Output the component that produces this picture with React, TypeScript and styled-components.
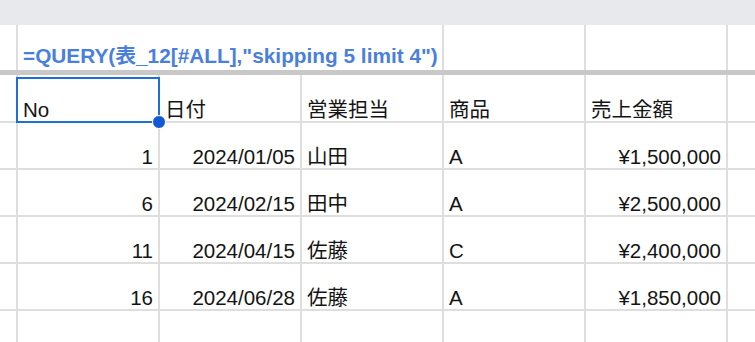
import React from 'react';
import styled, {createGlobalStyle} from 'styled-components';

const rows = [
  {no: 1, date: '2024/01/05', rep: '山田', item: 'A', amount: '¥1,500,000'},
  {no: 6, date: '2024/02/15', rep: '田中', item: 'A', amount: '¥2,500,000'},
  {no: 11, date: '2024/04/15', rep: '佐藤', item: 'C', amount: '¥2,400,000'},
  {no: 16, date: '2024/06/28', rep: '佐藤', item: 'A', amount: '¥1,850,000'},
];

const headers = ['日付', '営業担当', '商品', '売上金額'];

const App = () => {
  return (
    <>
      <GlobalStyle />
      <Page>
        <TopBand />
        <Sheet>
          {/* formula row */}
          <Cell height={45} noBottom />
          <Cell height={45} span={3} noBottom pad={3}>
            <Formula>=QUERY(表_12[#ALL],"skipping 5 limit 4")</Formula>
          </Cell>
          <Cell height={45} noBottom />
          <Cell height={45} noBottom />
          <Cell height={45} noBottom noRight />

          <FrozenLine />

          {/* header row */}
          <Cell height={48} />
          <Cell height={48}>
            No
            <Selection>
              <Handle />
            </Selection>
          </Cell>
          {headers.map((h) => (
            <Cell key={h} height={48}>
              {h}
            </Cell>
          ))}
          <Cell height={48} noRight />

          {rows.map((r) => (
            <React.Fragment key={r.no}>
              <Cell height={47} />
              <Cell height={47} align="right">
                {r.no}
              </Cell>
              <Cell height={47} align="right">
                {r.date}
              </Cell>
              <Cell height={47}>{r.rep}</Cell>
              <Cell height={47}>{r.item}</Cell>
              <Cell height={47} align="right">
                {r.amount}
              </Cell>
              <Cell height={47} noRight />
            </React.Fragment>
          ))}

          <Cell height={47} />
          <Cell height={47} />
          <Cell height={47} />
          <Cell height={47} />
          <Cell height={47} />
          <Cell height={47} />
          <Cell height={47} noRight />
        </Sheet>
      </Page>
    </>
  );
};

const GlobalStyle = createGlobalStyle`
  html, body {
    margin: 0;
    padding: 0;
    background: #fff;
    overflow: hidden;
  }
  body {
    font-family: "Liberation Sans", Arial, "Noto Sans CJK JP", sans-serif;
  }
`;

const Page = styled.div`
  width: 755px;
  height: 342px;
  overflow: hidden;
  background: #fff;
`;

const TopBand = styled.div`
  height: 25px;
  background: #e8e9ec;
`;

const Sheet = styled.div`
  display: grid;
  grid-template-columns: 18px repeat(5, 142px) 1fr;
`;

const Cell = styled.div<{
  height: number;
  span?: number;
  align?: 'left' | 'right';
  noBottom?: boolean;
  noRight?: boolean;
  pad?: number;
}>`
  position: relative;
  box-sizing: border-box;
  height: ${({height}) => height}px;
  grid-column: ${({span}) => (span ? `span ${span}` : 'auto')};
  display: flex;
  align-items: flex-end;
  justify-content: ${({align}) => (align === 'right' ? 'flex-end' : 'flex-start')};
  padding: 0 5px ${({pad}) => pad ?? 1}px 5px;
  border-right: ${({noRight}) => (noRight ? 'none' : '2px solid #dedede')};
  border-bottom: ${({noBottom}) => (noBottom ? 'none' : '2px solid #dedede')};
  font-size: 20.5px;
  line-height: 1;
  color: #141414;
  white-space: nowrap;
`;

const Formula = styled.span`
  font-weight: 700;
  font-size: 20.8px;
  color: #4a7fdb;
`;

const FrozenLine = styled.div`
  grid-column: 1 / -1;
  height: 5px;
  background: #c8c8c8;
`;

const Selection = styled.div`
  position: absolute;
  z-index: 2;
  left: -2px;
  top: 2px;
  right: -2px;
  bottom: -2px;
  border: 2.5px solid #1f6fd8;
  pointer-events: none;
`;

const Handle = styled.div`
  position: absolute;
  right: -8px;
  bottom: -8px;
  width: 12px;
  height: 12px;
  border-radius: 50%;
  background: #1558d6;
  border: 1px solid #fff;
`;

export default App;
